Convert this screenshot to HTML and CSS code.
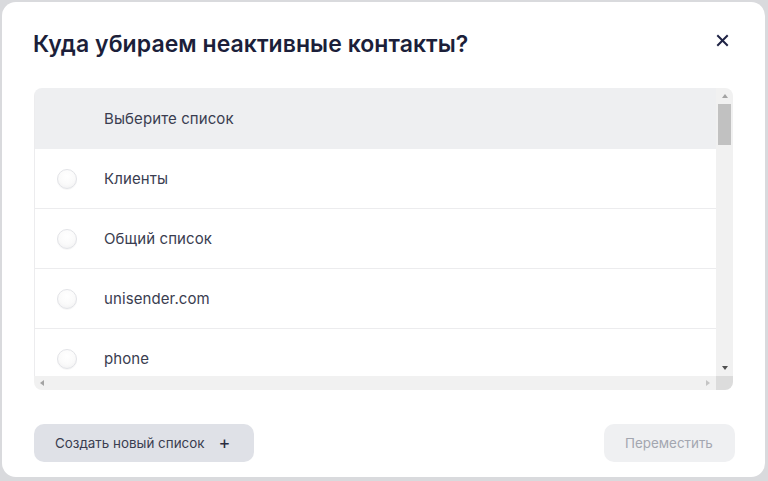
FILE: index.html
```html
<!DOCTYPE html>
<html lang="ru">
<head>
<meta charset="utf-8">
<link rel="stylesheet" href="styles.css">
</head>
<body>
<div class="modal">
  <div class="head">
    <h1 class="title">Куда убираем неактивные контакты?</h1>
    <button class="close" aria-label="Закрыть">
      <svg width="13" height="13" viewBox="0 0 13 13"><path d="M2 2L11 11M11 2L2 11" stroke="#1f2345" stroke-width="2" stroke-linecap="square" fill="none"/></svg>
    </button>
  </div>
  <div class="listbox">
    <div class="viewport">
      <div class="row row-head"><span class="label">Выберите список</span></div>
      <div class="row"><span class="radio"></span><span class="label">Клиенты</span></div>
      <div class="row"><span class="radio"></span><span class="label">Общий список</span></div>
      <div class="row"><span class="radio"></span><span class="label">unisender.com</span></div>
      <div class="row"><span class="radio"></span><span class="label">phone</span></div>
    </div>
    <div class="vscroll">
      <span class="arr arr-up"></span>
      <span class="thumb"></span>
      <span class="vfill"></span>
      <span class="arr arr-down"></span>
    </div>
    <div class="hscroll">
      <span class="arr arr-left"></span>
      <span class="hfill"></span>
      <span class="arr arr-right"></span>
    </div>
    <div class="corner"></div>
  </div>
  <div class="foot">
    <button class="btn btn-create">Создать новый список <span class="plus">+</span></button>
    <button class="btn btn-move">Переместить</button>
  </div>
</div>
</body>
</html>
```
FILE: styles.css
```css
html, body { margin: 0; padding: 0; }
body {
  background: #d9dadd;
  font-family: Inter, "Noto Sans", sans-serif;
  width: 768px;
  height: 481px;
  overflow: hidden;
}
.modal {
  margin: 2px 3px 0 2px;
  height: 475px;
  background: #fff;
  border-radius: 14px;
  box-sizing: border-box;
  padding: 0 30px 0 31px;
  display: flex;
  flex-direction: column;
}
.head {
  display: flex;
  align-items: center;
  justify-content: space-between;
  padding-top: 28px;
  height: 28px;
  box-sizing: content-box;
}
.title {
  margin: 0;
  font-size: 23px;
  font-weight: 600;
  line-height: 28px;
  color: #1c1f3a;
  letter-spacing: 0.05px;
}
.close {
  border: 0;
  background: none;
  padding: 0;
  width: 13px;
  height: 13px;
  margin-right: 6px;
  align-self: flex-start;
  margin-top: 4px;
  display: flex;
}
.listbox {
  margin-top: 30px;
  margin-left: 1px;
  width: 699px;
  display: grid;
  grid-template-columns: 682px 17px;
  grid-template-rows: 288px 14px;
  border-radius: 8px;
  overflow: hidden;
}
.viewport {
  overflow: hidden;
  border-left: 1px solid #ececee;
  box-sizing: border-box;
}
.row {
  height: 60px;
  box-sizing: border-box;
  border-bottom: 1px solid #ececee;
  display: flex;
  align-items: center;
  padding-left: 22px;
  gap: 27px;
}
.row-head {
  height: 61px;
  background: #eeeff1;
  padding-left: 69px;
  border-bottom: 0;
}
.label {
  font-size: 15px;
  color: #3a3d50;
  line-height: 20px;
  letter-spacing: 0.1px;
}
.radio {
  width: 20px;
  height: 20px;
  border-radius: 50%;
  box-sizing: border-box;
  border: 1px solid #e2e3e7;
  background: radial-gradient(circle at 50% 35%, #ffffff 0%, #fafafa 55%, #ededef 100%);
  box-shadow: 0 1px 1px rgba(0,0,0,0.04);
  flex: none;
}
.vscroll {
  background: #f1f1f1;
  display: flex;
  flex-direction: column;
  align-items: center;
}
.vfill, .hfill { flex: 1; }
.thumb {
  width: 13px;
  height: 41px;
  background: #c1c1c1;
  margin-top: 6px;
}
.arr { width: 0; height: 0; flex: none; }
.arr-up {
  margin-top: 6px;
  border-left: 3.5px solid transparent;
  border-right: 3.5px solid transparent;
  border-bottom: 4px solid #a3a3a3;
}
.arr-down {
  margin-bottom: 6px;
  border-left: 3.5px solid transparent;
  border-right: 3.5px solid transparent;
  border-top: 4px solid #505050;
}
.hscroll {
  background: #f1f1f1;
  display: flex;
  align-items: center;
  padding: 0 6px 0 6px;
}
.arr-left {
  border-top: 3.5px solid transparent;
  border-bottom: 3.5px solid transparent;
  border-right: 4px solid #a3a3a3;
}
.arr-right {
  border-top: 3.5px solid transparent;
  border-bottom: 3.5px solid transparent;
  border-left: 4px solid #c4c4c4;
}
.corner { background: #dcdcdc; }
.foot {
  margin-top: 34px;
  display: flex;
  justify-content: space-between;
  align-items: center;
  padding-left: 1px;
}
.btn {
  height: 38px;
  box-sizing: border-box;
  border: 0;
  border-radius: 10px;
  font-family: Inter, "Noto Sans", sans-serif;
  font-size: 13.4px;
  line-height: 20px;
  padding: 0 20px 0 21px;
  display: flex;
  align-items: center;
  white-space: nowrap;
}
.btn-create {
  width: 220px;
  background: #dfe1e7;
  color: #3a3d50;
}
.plus {
  margin-left: 14px;
  font-size: 18px;
  font-weight: 400;
  color: #2a2d40;
}
.btn-move {
  width: 131px;
  background: #eff0f2;
  color: #a3a6b0;
}
```
